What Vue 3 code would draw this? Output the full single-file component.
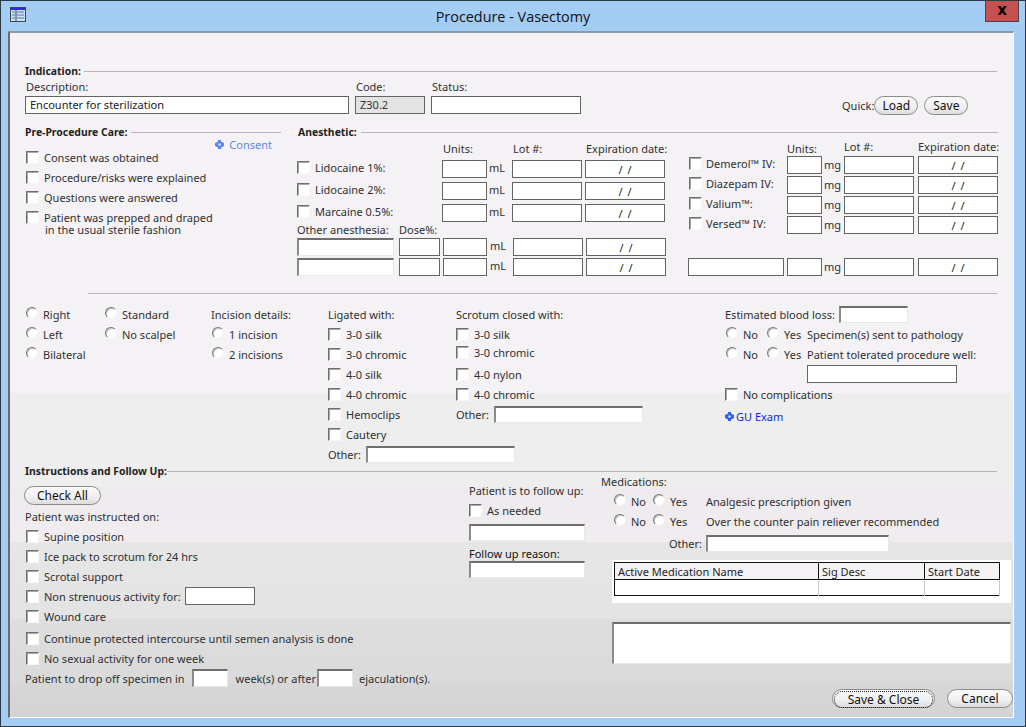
<template>
  <div class="window">
    <div class="titlebar">
      <svg class="app-icon" viewBox="0 0 16 15" width="16" height="15" aria-hidden="true">
        <rect x="0.5" y="0.5" width="15" height="14" fill="#cfe0ee" stroke="#3a4656" />
        <rect x="1" y="1" width="14" height="2" fill="#2a2ae0" />
        <path d="M2 5h3M2 8h3M2 11h3M7 5h7M7 8h7M7 11h7" stroke="#8fb0cc" stroke-width="2" fill="none" />
        <path d="M6 3v11" stroke="#3a4656" fill="none" />
      </svg>
      <div class="title">Procedure - Vasectomy</div>
      <button class="close-btn">x</button>
    </div>

    <div class="form">
      <!-- Indication -->
      <section class="indication">
        <div class="head"><b>Indication:</b><i></i></div>
        <div class="ind-fields">
          <div class="field desc">
            <label>Description:</label>
            <input class="flat" value="Encounter for sterilization" />
          </div>
          <div class="field code">
            <label>Code:</label>
            <input class="flat readonly" value="Z30.2" readonly />
          </div>
          <div class="field status">
            <label>Status:</label>
            <input class="flat" />
          </div>
          <div class="quick">
            <span>Quick:</span>
            <button class="pill load">Load</button>
            <button class="pill save">Save</button>
          </div>
        </div>
      </section>

      <!-- Pre-procedure / anesthetic -->
      <section class="middle">
        <div class="precare">
          <div class="head"><b>Pre-Procedure Care:</b><i></i></div>
          <a class="consent">
            <svg class="diamond" viewBox="0 0 9 9" width="9" height="9" aria-hidden="true">
              <path d="M3 0h3v1.500L9 3v3L6 7.500V9H3V7.500L0 6V3l3-1.500Z" fill="#5c86f2" />
              <rect x="3.500" y="3.500" width="2" height="2" fill="#fff" />
            </svg>
            Consent
          </a>
          <label v-for="t in careItems" :key="t" class="row cb-row">
            <input type="checkbox" /><span>{{ t }}</span>
          </label>
          <div class="care-cont">in the usual sterile fashion</div>
        </div>

        <div class="anes">
          <div class="head"><b>Anesthetic:</b><i></i></div>
          <div class="anes-cols">
            <div class="anes-left">
              <div class="al-grid">
                <span></span>
                <label>Units:</label>
                <span></span>
                <label>Lot #:</label>
                <label class="exp">Expiration date:</label>
                <template v-for="m in leftDrugs" :key="m">
                  <label class="drug"><input type="checkbox" /><span>{{ m }}</span></label>
                  <input class="flat units" />
                  <span class="unit">mL</span>
                  <input class="flat" />
                  <input class="flat date" value="/ /" />
                </template>
              </div>
              <div class="other-head">
                <label>Other anesthesia:</label>
                <label>Dose%:</label>
              </div>
              <div class="other-grid">
                <template v-for="n in 2" :key="n">
                  <input class="inset" />
                  <input class="flat" />
                  <input class="flat" />
                  <span class="unit">mL</span>
                  <input class="flat" />
                  <input class="flat date" value="/ /" />
                </template>
              </div>
            </div>

            <div class="anes-right">
              <div class="ar-grid ar-top">
                <span></span>
                <label class="low">Units:</label>
                <span></span>
                <label>Lot #:</label>
                <label class="exp">Expiration date:</label>
                <template v-for="m in rightDrugs" :key="m">
                  <label class="drug"><input type="checkbox" /><span>{{ m }}</span></label>
                  <input class="flat" />
                  <span class="unit">mg</span>
                  <input class="flat" />
                  <input class="flat date" value="/ /" />
                </template>
              </div>
              <div class="ar-grid ar-extra">
                <input class="flat other-mg" />
                <input class="flat" />
                <span class="unit">mg</span>
                <input class="flat" />
                <input class="flat date" value="/ /" />
              </div>
            </div>
          </div>
        </div>
      </section>

      <hr class="rule" />

      <!-- Procedure details -->
      <section class="details">
        <div class="col c1">
          <label v-for="t in ['Right', 'Left', 'Bilateral']" :key="t" class="row">
            <input type="radio" name="side" /><span>{{ t }}</span>
          </label>
        </div>
        <div class="col c2">
          <label v-for="t in ['Standard', 'No scalpel']" :key="t" class="row">
            <input type="radio" name="tech" /><span>{{ t }}</span>
          </label>
        </div>
        <div class="col c3">
          <div class="row">Incision details:</div>
          <label v-for="t in ['1 incision', '2 incisions']" :key="t" class="row">
            <input type="radio" name="inc" /><span>{{ t }}</span>
          </label>
        </div>
        <div class="col c4">
          <div class="row">Ligated with:</div>
          <label v-for="t in ligated" :key="t" class="row">
            <input type="checkbox" /><span>{{ t }}</span>
          </label>
          <div class="row">Other:<input class="inset lig-other" /></div>
        </div>
        <div class="col c5">
          <div class="row">Scrotum closed with:</div>
          <label class="row"><input type="checkbox" /><span>3-0 silk</span></label>
          <label class="row tight"><input type="checkbox" /><span>3-0 chromic</span></label>
          <label class="row"><input type="checkbox" /><span>4-0 nylon</span></label>
          <label class="row"><input type="checkbox" /><span>4-0 chromic</span></label>
          <div class="row">Other:<input class="inset lig-other" /></div>
        </div>
        <div class="col c6">
          <div class="row">Estimated blood loss:<input class="inset blood" /></div>
          <div class="row yn">
            <label><input type="radio" name="path" /><span>No</span></label>
            <label class="yes"><input type="radio" name="path" /><span>Yes</span></label>
            <span class="yn-text">Specimen(s) sent to pathology</span>
          </div>
          <div class="row yn">
            <label><input type="radio" name="tol" /><span>No</span></label>
            <label class="yes"><input type="radio" name="tol" /><span>Yes</span></label>
            <span class="yn-text">Patient tolerated procedure well:</span>
          </div>
          <div class="row tol-row"><input class="flat tol" /></div>
          <label class="row"><input type="checkbox" /><span>No complications</span></label>
          <a class="gu">
            <svg class="diamond" viewBox="0 0 9 9" width="9" height="9" aria-hidden="true">
              <path d="M3 0h3v1.500L9 3v3L6 7.500V9H3V7.500L0 6V3l3-1.500Z" fill="#2f62ee" />
              <rect x="3.500" y="3.500" width="2" height="2" fill="#fff" />
            </svg>
            GU Exam
          </a>
        </div>
      </section>

      <!-- Instructions -->
      <section class="instructions">
        <div class="head"><b>Instructions and Follow Up:</b><i></i></div>
        <div class="ins-cols">
          <div class="ins-left">
            <button class="pill check-all">Check All</button>
            <div class="row">Patient was instructed on:</div>
            <label v-for="t in instructed" :key="t" class="row">
              <input type="checkbox" /><span>{{ t }}</span>
            </label>
            <label class="row">
              <input type="checkbox" /><span>Non strenuous activity for:</span>
              <input class="flat activity" />
            </label>
            <label class="row"><input type="checkbox" /><span>Wound care</span></label>
            <label class="row gap-top"><input type="checkbox" /><span>Continue protected intercourse until semen analysis is done</span></label>
            <label class="row"><input type="checkbox" /><span>No sexual activity for one week</span></label>
            <div class="row dropoff">
              Patient to drop off specimen in
              <input class="inset short first" />
              <span class="mid">week(s) or after</span>
              <input class="inset short" />
              <span class="end">ejaculation(s).</span>
            </div>
          </div>

          <div class="ins-mid">
            <div class="lbl follow">Patient is to follow up:</div>
            <label class="row needed"><input type="checkbox" /><span>As needed</span></label>
            <input class="inset wide" />
            <div class="lbl reason">Follow up reason:</div>
            <input class="inset wide reason-input" />
          </div>

          <div class="ins-right">
            <div class="lbl meds">Medications:</div>
            <div v-for="(t, i) in medRows" :key="t" class="row med" :class="{ firstmed: i === 0 }">
              <label><input type="radio" :name="'med' + i" /><span>No</span></label>
              <label class="yes"><input type="radio" :name="'med' + i" /><span>Yes</span></label>
              <span class="med-text">{{ t }}</span>
            </div>
            <div class="row med-other">Other:<input class="inset" /></div>
            <div class="table-box">
              <table>
                <thead>
                  <tr><th class="name">Active Medication Name</th><th class="sig">Sig Desc</th><th>Start Date</th></tr>
                </thead>
                <tbody>
                  <tr><td></td><td></td><td></td></tr>
                </tbody>
              </table>
            </div>
            <textarea class="notes"></textarea>
            <div class="actions">
              <button class="pill save-close"><span>Save &amp; Close</span></button>
              <button class="pill cancel">Cancel</button>
            </div>
          </div>
        </div>
      </section>
    </div>
  </div>
</template>

<script setup>
const careItems = [
  'Consent was obtained',
  'Procedure/risks were explained',
  'Questions were answered',
  'Patient was prepped and draped',
]
const leftDrugs = ['Lidocaine 1%:', 'Lidocaine 2%:', 'Marcaine 0.5%:']
const rightDrugs = ['Demerol™ IV:', 'Diazepam IV:', 'Valium™:', 'Versed™ IV:']
const ligated = ['3-0 silk', '3-0 chromic', '4-0 silk', '4-0 chromic', 'Hemoclips', 'Cautery']
const instructed = ['Supine position', 'Ice pack to scrotum for 24 hrs', 'Scrotal support']
const medRows = ['Analgesic prescription given', 'Over the counter pain reliever recommended']
</script>

<style>
html, body { margin: 0; background: #a3cdf5; }
</style>

<style scoped>
* { box-sizing: border-box; }

.window {
  width: 1026px;
  height: 727px;
  overflow: hidden;
  background: #a3cdf5;
  border: 1px solid #2c3a44;
  font-family: "Noto Sans", "DejaVu Sans", sans-serif;
  font-size: 11px;
  color: #303030;
}

.titlebar {
  height: 30px;
  display: flex;
  align-items: flex-start;
  position: relative;
}
.app-icon { margin: 6px 0 0 9px; }
.title {
  position: absolute;
  left: 0;
  right: 0;
  top: 6px;
  text-align: center;
  font-family: "Open Sans", sans-serif;
  font-size: 14.4px;
  color: #111;
}
.close-btn {
  margin-left: auto;
  margin-right: 6px;
  width: 34px;
  height: 21px;
  padding: 0 0 4px;
  background: #c75050;
  border: 1px solid #4e4044;
  border-top: none;
  color: #000;
  font: bold 15px "DejaVu Sans", sans-serif;
}

.form {
  margin-left: 7px;
  width: 1006px;
  height: 687px;
  padding: 31px 16px 0 15px;
  border-top: 2px solid #8b99a8;
  border-left: 2px solid #6b6b6b;
  border-right: 1px solid #fff;
  border-bottom: 1px solid #fff;
  background: linear-gradient(to bottom,
    #f5f2f6 0, #f5f2f6 360px,
    #eeeeee 360px, #eeeeee 454px,
    #eeebef 454px, #f0ecf0 509px,
    #e6e6e6 509px, #e3e3e3 586px,
    #dededf 586px, #dadadb 650px,
    #d7d7d7 650px, #d3d3d3 100%);
}

.head {
  display: flex;
  align-items: center;
  height: 14px;
  gap: 4px;
}
.head b { font-size: 10.4px; font-weight: 700; color: #222; white-space: nowrap; }
.head i { flex: 1; height: 1px; background: #b9b5ba; }
.indication .head { gap: 3px; }
.instructions .head { gap: 0; }

input:not([type]) { outline: none; }
.flat, .inset {
  flex: none;
  height: 18px;
  padding: 0 4px;
  font: inherit;
  color: #222;
  background: #fff;
  min-width: 0;
  width: 100%;
}
.flat { border: 1px solid #646464; }
.inset {
  border: 1px solid #e8e8e8;
  border-top: 2px solid #6e6e6e;
  border-left: 2px solid #8a8a8a;
}
.readonly { background: #e3e3e3; color: #333; }
.date { text-align: center; word-spacing: 2px; }
.desc input, .code input { padding-bottom: 1px; }

input[type=checkbox] {
  appearance: none;
  flex: none;
  width: 13px;
  height: 13px;
  margin: 0 5px 0 1px;
  background: #fff;
  border: 1px solid #f7f7f7;
  border-top: 1px solid #6e6e6e;
  border-left: 1px solid #6e6e6e;
  box-shadow: inset 1px 1px 0 #a8a8a8;
}
input[type=radio] {
  appearance: none;
  flex: none;
  width: 12px;
  height: 12px;
  margin: -3px 5px 0 1px;
  border-radius: 50%;
  background: #fff;
  border: 1px solid #f2f2f2;
  border-top-color: #777;
  border-left-color: #777;
  box-shadow: inset 1px 1px 0 #c4c4c4;
}

.row {
  display: flex;
  align-items: center;
  height: 20px;
  white-space: nowrap;
}
.row.tight { height: 18px; margin-top: -1px; margin-bottom: 3px; }

.pill {
  height: 19px;
  padding: 0;
  border: 1px solid #8c8c8c;
  border-radius: 10px;
  background: linear-gradient(to bottom, #fafafa, #f1f1f1 55%, #dcdcdc);
  font: inherit;
  font-size: 12px;
  color: #111;
}

/* indication */
.ind-fields {
  display: flex;
  align-items: flex-end;
  margin-top: 2px;
}
.field label { display: block; height: 14px; line-height: 14px; margin-bottom: 2px; padding-left: 1px; }
.desc { width: 324px; }
.code { width: 70px; margin-left: 6px; }
.status { width: 150px; margin-left: 6px; }
.quick {
  display: flex;
  align-items: center;
  margin-left: 261px;
  margin-bottom: -1px;
  white-space: nowrap;
}
.load { width: 44px; }
.save { width: 44px; margin-left: 6px; }

/* middle */
.middle {
  display: flex;
  margin-top: 11px;
}
.precare { width: 256px; flex: none; }
.consent {
  display: flex;
  align-items: center;
  justify-content: flex-end;
  gap: 5px;
  height: 14px;
  margin: -2px 9px -4px 0;
  color: #5a86f5;
}
.cb-row { height: 20px; }
.care-cont { padding-left: 20px; line-height: 10px; margin-top: -2px; }

.anes { width: 701px; flex: none; margin-left: 16px; }
.anes > .head b { margin-left: 1px; }
.anes-cols { display: flex; }
.anes-left { width: 391px; flex: none; }

.exp { white-space: nowrap; }
.al-grid {
  display: grid;
  grid-template-columns: 145px 45px 25px 70px 80px;
  grid-template-rows: 14px;
  grid-auto-rows: 18px;
  row-gap: 4px;
  margin-top: 3px;
}
.al-grid > label:not(.drug) { line-height: 14px; height: 14px; padding-left: 1px; }
.al-grid .date { margin-left: 3px; width: 80px; }
.al-grid .exp { margin-left: 3px; }
.al-grid .unit { line-height: 15px; }
.drug { display: flex; align-items: center; height: 14px; white-space: nowrap; }
.drug input[type=checkbox] { margin-left: 0; }
.anes-right .drug input[type=checkbox] { margin-left: 1px; margin-right: 4px; }
.unit { line-height: 16px; padding-left: 2px; }

.other-head {
  display: flex;
  height: 14px;
  line-height: 14px;
  margin-top: 1px;
}
.other-head label:first-child { width: 102px; }
.other-grid {
  display: grid;
  grid-template-columns: 97px 41px 44px 26px 70px 80px;
  grid-auto-rows: 18px;
  row-gap: 2px;
  margin-top: 1px;
}
.other-grid > :nth-child(6n+2) { margin-left: 5px; width: 41px; }
.other-grid > :nth-child(6n+3) { margin-left: 8px; width: 44px; }
.other-grid > :nth-child(6n+4) { padding-left: 11px; }
.other-grid > :nth-child(6n+5) { margin-left: 8px; }
.other-grid > :nth-child(6n+6) { margin-left: 11px; }

.anes-right { width: 310px; flex: none; }
.ar-grid {
  display: grid;
  grid-template-columns: 99px 35px 22px 70px 84px;
  grid-auto-rows: 18px;
  row-gap: 2px;
}
.ar-top { grid-template-rows: 14px; margin-top: 1px; }
.ar-grid > label:not(.drug) { line-height: 14px; }
.ar-grid .date { margin-left: 4px; width: 80px; }
.ar-grid .exp { margin-left: 4px; }
.ar-grid .low { padding-top: 2px; height: 16px; }
.ar-grid .unit { padding-left: 2px; line-height: 18px; }
.ar-extra { margin-top: 24px; }
.other-mg { width: 96px; }

.rule {
  height: 1px;
  border: none;
  margin: 17px 0 0 63px;
  background: #b9b5ba;
}

/* details */
.details {
  display: grid;
  grid-template-columns: 79px 107px 117px 128px 269px 273px;
  margin-top: 10px;
  height: 160px;
}
.c4 input[type=checkbox], .c5 input[type=checkbox] { margin-left: 0; }
.lig-other { width: 149px; height: 17px; margin-left: 5px; }
.blood { width: 69px; height: 17px; margin-left: 4px; }
.yn label { display: flex; align-items: center; width: 41px; flex: none; }
.yn .yes { width: 41px; }
.tol-row { padding-left: 82px; }
.tol { width: 150px; }
.gu {
  display: flex;
  align-items: center;
  gap: 2px;
  height: 20px;
  margin-top: 2px;
  color: #0a28e8;
}
.c6 input[type=checkbox] { margin-left: 0; }

/* instructions */
.ins-cols { display: flex; }
.ins-left { width: 444px; flex: none; }
.check-all { display: block; width: 77px; margin: 8px 0 1px -1px; font-size: 12px; }
.activity { width: 70px; margin-left: 4px; }
.gap-top { margin-top: 2px; }
.short { width: 36px; }
.first { margin-left: 7px; }
.mid { margin: 0 1px 0 8px; }
.end { margin-left: 6px; }

.ins-mid { width: 132px; flex: none; }
.lbl { height: 14px; line-height: 14px; white-space: nowrap; }
.follow { margin-top: 6px; }
.needed { margin-top: 2px; }
.needed input[type=checkbox] { margin-left: 0; }
.wide { width: 116px; display: block; margin-top: 4px; height: 17px; }
.reason { margin-top: 6px; color: #111; }
.reason-input { margin-top: 0; }

.ins-right { width: 412px; flex: none; margin-top: -3px; }
.med { padding-left: 12px; }
.firstmed { margin-top: 2px; }
.med label { display: flex; align-items: center; width: 39px; flex: none; }
.med .yes { width: 54px; }
.med-other { padding-left: 68px; height: 20px; margin-top: 2px; }
.med-other input { width: 183px; height: 17px; margin-left: 4px; }

.table-box {
  width: 399px;
  height: 43px;
  margin: 7px 0 0 11px;
  padding: 2px 0 0 2px;
  background: #fff;
}
table {
  width: 386px;
  border-collapse: collapse;
  table-layout: fixed;
  border: 1px solid #111;
}
th {
  height: 16px;
  padding: 1px 3px 0;
  font-weight: 400;
  text-align: left;
  background: #f5f2f6;
  color: #222;
  border-right: 1px solid #111;
  border-bottom: 1px solid #111;
  white-space: nowrap;
}
th.name { width: 204px; }
th.sig { width: 106px; }
td { height: 16px; border-right: 1px solid #c8c8c8; background: #fff; }

.notes {
  display: block;
  width: 399px;
  height: 42px;
  margin: 19px 0 0 11px;
  resize: none;
  background: #fff;
  border: 1px solid #e8e8e8;
  border-top: 2px solid #6e6e6e;
  border-left: 2px solid #8a8a8a;
  outline: none;
}

.actions {
  display: flex;
  margin: 25px 0 0 231px;
}
.save-close { width: 103px; }
.save-close span {
  display: block;
  margin: 1px;
  line-height: 15px;
  border: 1px dotted #222;
  border-radius: 8px;
}
.cancel { width: 66px; margin-left: 12px; }
</style>
